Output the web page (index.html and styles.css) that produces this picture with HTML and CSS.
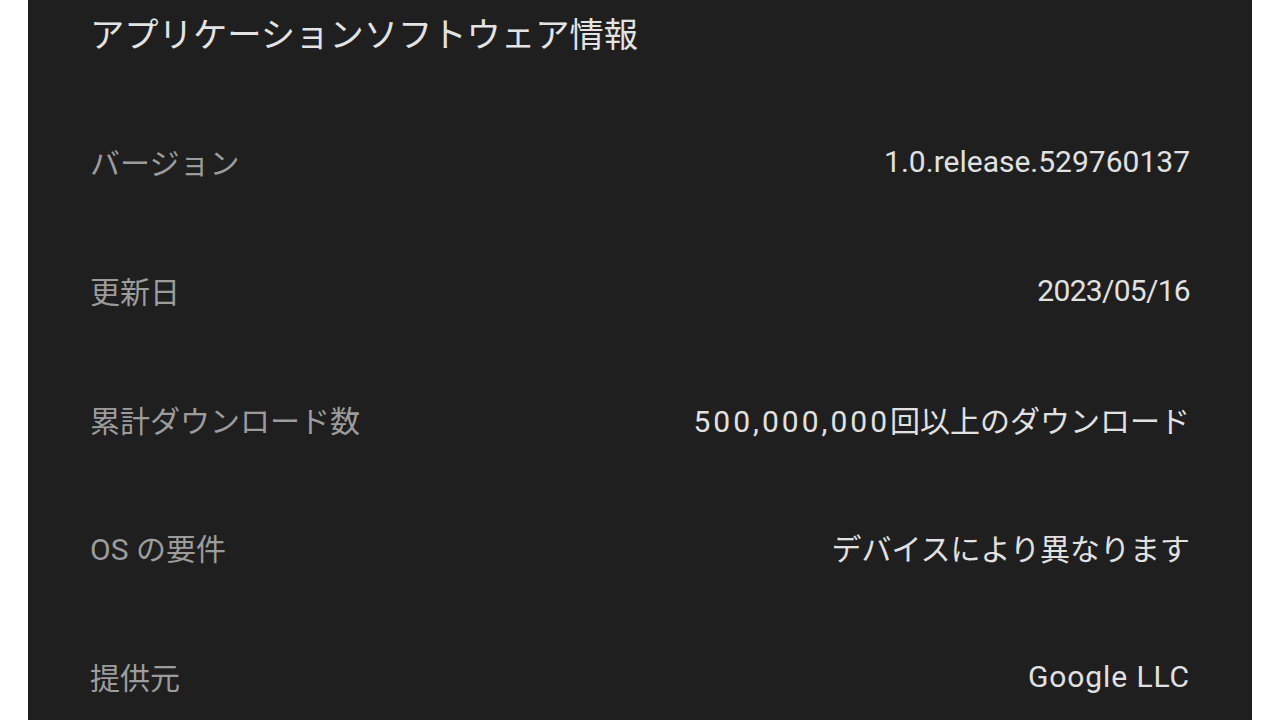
FILE: index.html
```html
<!DOCTYPE html>
<html lang="ja">
<head>
<meta charset="utf-8">
<link rel="stylesheet" href="styles.css">
</head>
<body>
<div class="page">
  <section class="panel">
    <h1 class="title">アプリケーションソフトウェア情報</h1>
    <div class="rows">
      <div class="row"><span class="label">バージョン</span><span class="value">1.0.release.529760137</span></div>
      <div class="row"><span class="label">更新日</span><span class="value value-date">2023/05/16</span></div>
      <div class="row"><span class="label">累計ダウンロード数</span><span class="value"><span class="count">500,000,000</span>回以上のダウンロード</span></div>
      <div class="row"><span class="label">OS の要件</span><span class="value">デバイスにより異なります</span></div>
      <div class="row"><span class="label">提供元</span><span class="value value-wide">Google LLC</span></div>
    </div>
  </section>
</div>
</body>
</html>
```

FILE: styles.css
```css
html, body {
  margin: 0;
  padding: 0;
  background: #ffffff;
}
.page {
  width: 1280px;
  height: 720px;
  overflow: hidden;
  padding: 0 28px;
  box-sizing: border-box;
}
.panel {
  background: #1f1f1f;
  height: 720px;
  padding: 0 62px;
  box-sizing: border-box;
  font-family: "Roboto", "Noto Sans CJK JP", sans-serif;
}
.title {
  margin: 0;
  height: 66px;
  line-height: 64px;
  font-size: 34.3px;
  font-weight: 400;
  color: #e3e3e3;
  font-family: "Noto Sans CJK JP", sans-serif;
}
.rows {
  margin-top: 31px;
  display: flex;
  flex-direction: column;
}
.row {
  height: 128.7px;
  display: flex;
  align-items: center;
  justify-content: space-between;
  font-size: 30px;
}
.label {
  color: #9c9c9c;
}
.value {
  color: #e1e1e1;
}
.value-date {
  letter-spacing: -0.7px;
}
.value-wide {
  letter-spacing: 0.9px;
}
.count {
  letter-spacing: 3px;
}
```
